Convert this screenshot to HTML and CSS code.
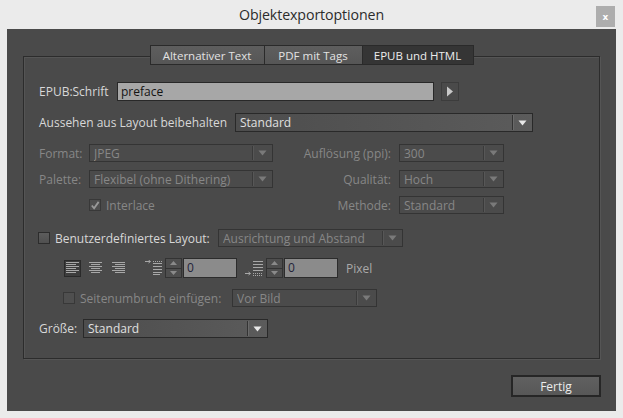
FILE: index.html
```html
<!DOCTYPE html>
<html lang="de">
<head>
<meta charset="utf-8">
<title>Objektexportoptionen</title>
<link rel="stylesheet" href="styles.css">
</head>
<body>
<div class="titlebar">
  <div></div>
  <div class="title">Objektexportoptionen</div>
  <div class="close">x</div>
</div>
<div class="window">
  <div class="group">
    <div class="tabs">
      <div class="tab t1">Alternativer Text</div>
      <div class="tab t2">PDF mit Tags</div>
      <div class="tab t3 active">EPUB und HTML</div>
    </div>

    <div class="row row-epub">
      <span class="lbl lbl-epub">EPUB:Schrift</span>
      <div class="input input-epub">preface</div>
      <div class="arrowbtn"><svg width="8" height="11" viewBox="0 0 8 11"><path d="M1 0.5 L7 5.5 L1 10.5 Z" fill="#c8c8c8"/></svg></div>
    </div>

    <div class="row row-layout">
      <span class="lbl lbl-layout">Aussehen aus Layout beibehalten</span>
      <div class="select sel-layout"><span class="val">Standard</span><span class="sep"></span><span class="arr"><svg width="9" height="6" viewBox="0 0 9 6"><path d="M0.5 0.5 L8.5 0.5 L4.5 5.5 Z"/></svg></span></div>
    </div>

    <div class="imggrid">
      <span class="lbl dis">Format:</span>
      <div class="select dis sel-left"><span class="val">JPEG</span><span class="sep"></span><span class="arr"><svg width="9" height="6" viewBox="0 0 9 6"><path d="M0.5 0.5 L8.5 0.5 L4.5 5.5 Z"/></svg></span></div>
      <span class="lbl dis rlbl">Auflösung (ppi):</span>
      <div class="select dis sel-right"><span class="val">300</span><span class="sep"></span><span class="arr"><svg width="9" height="6" viewBox="0 0 9 6"><path d="M0.5 0.5 L8.5 0.5 L4.5 5.5 Z"/></svg></span></div>

      <span class="lbl dis">Palette:</span>
      <div class="select dis sel-left"><span class="val">Flexibel (ohne Dithering)</span><span class="sep"></span><span class="arr"><svg width="9" height="6" viewBox="0 0 9 6"><path d="M0.5 0.5 L8.5 0.5 L4.5 5.5 Z"/></svg></span></div>
      <span class="lbl dis rlbl">Qualität:</span>
      <div class="select dis sel-right"><span class="val">Hoch</span><span class="sep"></span><span class="arr"><svg width="9" height="6" viewBox="0 0 9 6"><path d="M0.5 0.5 L8.5 0.5 L4.5 5.5 Z"/></svg></span></div>

      <span></span>
      <div class="check-line"><span class="cb dis checked"><svg width="11" height="11" viewBox="0 0 11 11"><path d="M2 5.5 L4.5 8.5 L9.5 1.5" fill="none" stroke="#9a9a9a" stroke-width="2"/></svg></span><span class="dis">Interlace</span></div>
      <span class="lbl dis rlbl">Methode:</span>
      <div class="select dis sel-right"><span class="val">Standard</span><span class="sep"></span><span class="arr"><svg width="9" height="6" viewBox="0 0 9 6"><path d="M0.5 0.5 L8.5 0.5 L4.5 5.5 Z"/></svg></span></div>
    </div>

    <div class="row row-custom">
      <div class="check-line custom-lbl"><span class="cb"></span><span class="lbl">Benutzerdefiniertes Layout:</span></div>
      <div class="select dis sel-custom"><span class="val">Ausrichtung und Abstand</span><span class="sep"></span><span class="arr"><svg width="9" height="6" viewBox="0 0 9 6"><path d="M0.5 0.5 L8.5 0.5 L4.5 5.5 Z"/></svg></span></div>
    </div>

    <div class="row row-align">
      <div class="alignbtns">
        <span class="abtn pressed"><svg width="13" height="12" viewBox="0 0 13 12"><g stroke="#a8a8a8" stroke-width="1"><path d="M0 0.5H13M0 2.5H10M0 4.5H13M0 6.5H10M0 8.5H13M0 10.5H10"/></g></svg></span>
        <span class="abtn"><svg width="13" height="12" viewBox="0 0 13 12"><g stroke="#a8a8a8" stroke-width="1"><path d="M0 0.5H13M2 2.5H11M0 4.5H13M2 6.5H11M0 8.5H13M2 10.5H11"/></g></svg></span>
        <span class="abtn"><svg width="13" height="12" viewBox="0 0 13 12"><g stroke="#a8a8a8" stroke-width="1"><path d="M0 0.5H13M3 2.5H13M0 4.5H13M3 6.5H13M0 8.5H13M3 10.5H13"/></g></svg></span>
      </div>
      <span class="spico ico-before"><svg width="17" height="16" viewBox="0 0 17 16"><g stroke="#a8a8a8" stroke-width="1" fill="none"><path d="M0 1.5H5"/><path d="M3.5 0 L5.5 1.5 L3.5 3"/><path d="M8 1.5H17" stroke-dasharray="1 1"/><path d="M8 3.5H17"/><path d="M8 6.5H17M8 9.5H17M8 12.5H17M8 14.5H15"/></g></svg></span>
      <span class="spin"><span class="half"><svg width="7" height="4" viewBox="0 0 7 4"><path d="M0 4 L3.5 0 L7 4Z" fill="#8a8a8a"/></svg></span><span class="half"><svg width="7" height="4" viewBox="0 0 7 4"><path d="M0 0 L3.5 4 L7 0Z" fill="#8a8a8a"/></svg></span></span>
      <div class="numinput">0</div>
      <span class="spico ico-after"><svg width="18" height="16" viewBox="0 0 18 16"><g stroke="#a8a8a8" stroke-width="1" fill="none"><path d="M8 1.5H18M8 4.5H18M8 7.5H18M8 10.5H18"/><path d="M8 13.5H18" stroke-dasharray="1 1"/><path d="M8 15.5H18" stroke-dasharray="1 1"/><path d="M0 13.5H5"/><path d="M3.5 12 L5.5 13.5 L3.5 15"/></g></svg></span>
      <span class="spin"><span class="half"><svg width="7" height="4" viewBox="0 0 7 4"><path d="M0 4 L3.5 0 L7 4Z" fill="#8a8a8a"/></svg></span><span class="half"><svg width="7" height="4" viewBox="0 0 7 4"><path d="M0 0 L3.5 4 L7 0Z" fill="#8a8a8a"/></svg></span></span>
      <div class="numinput">0</div>
      <span class="pixel">Pixel</span>
    </div>

    <div class="row row-break">
      <div class="check-line break-lbl"><span class="cb dis"></span><span class="dis">Seitenumbruch einfügen:</span></div>
      <div class="select dis sel-break"><span class="val">Vor Bild</span><span class="sep"></span><span class="arr"><svg width="9" height="6" viewBox="0 0 9 6"><path d="M0.5 0.5 L8.5 0.5 L4.5 5.5 Z"/></svg></span></div>
    </div>

    <div class="row row-size">
      <span class="lbl lbl-size">Größe:</span>
      <div class="select sel-size"><span class="val">Standard</span><span class="sep"></span><span class="arr"><svg width="9" height="6" viewBox="0 0 9 6"><path d="M0.5 0.5 L8.5 0.5 L4.5 5.5 Z"/></svg></span></div>
    </div>
  </div>
  <div class="footer">
    <button class="btn">Fertig</button>
  </div>
</div>
</body>
</html>
```

FILE: styles.css
```css
* { box-sizing: border-box; }
html, body {
  margin: 0;
  padding: 0;
}
body {
  width: 623px;
  height: 418px;
  background: #ebebeb;
  font-family: "Open Sans", "Noto Sans", sans-serif;
  font-size: 12px;
  color: #d8d8d8;
  overflow: hidden;
}

.titlebar {
  height: 29px;
  display: grid;
  grid-template-columns: 1fr auto 1fr;
  align-items: start;
}
.title {
  font-size: 14.2px;
  color: #2b2b2b;
  line-height: 30px;
  letter-spacing: -0.1px;
}
.close {
  justify-self: end;
  margin: 6px 8px 0 0;
  width: 19px;
  height: 21px;
  background: #adadad;
  color: #fff;
  font-family: "DejaVu Sans", sans-serif;
  font-weight: bold;
  font-size: 9px;
  display: flex;
  align-items: center;
  justify-content: center;
}

.window {
  margin: 0 7px;
  height: 382px;
  background: #4a4a4a;
  padding: 27px 16px 0;
}

.group {
  height: 303px;
  border: 1px solid #2c2c2c;
  box-shadow: inset 1px 1px 0 #555, 1px 1px 0 #555;
  padding: 0 0 0 15px;
}

.tabs {
  display: flex;
  justify-content: center;
  margin: -12px 0 0 -15px;
  height: 20px;
}
.tab {
  height: 20px;
  border: 1px solid #2a2a2a;
  border-left: none;
  background: linear-gradient(#5e5e5e, #565656);
  color: #e2e2e2;
  display: flex;
  align-items: center;
  justify-content: center;
  font-size: 11.5px;
}
.t1 { width: 115px; border-left: 1px solid #2a2a2a; }
.t2 { width: 98px; }
.t3 { width: 111px; }
.tab.active { background: #353535; color: #ececec; }

.row {
  display: flex;
  align-items: center;
}
.lbl { color: #d8d8d8; white-space: nowrap; }
.dis { color: #878787; white-space: nowrap; }

.input {
  height: 19px;
  border: 1px solid #282828;
  background: #a7a7a7;
  color: #141414;
  padding-left: 3px;
  font-size: 12px;
  line-height: 17px;
}

.row-epub { margin-top: 17px; height: 19px; }
.lbl-epub { width: 78px; }
.input-epub { width: 317px; }
.arrowbtn {
  margin-left: 7px;
  width: 18px;
  height: 19px;
  border: 1px solid #3c3c3c;
  display: flex;
  align-items: center;
  justify-content: center;
}

.select {
  display: flex;
  align-items: center;
  height: 19px;
  border: 1px solid #292929;
  background: linear-gradient(to right, #4d4d4d, #5b5b5b);
  color: #e0e0e0;
  padding-left: 4px;
  font-size: 12px;
}
.select .val { flex: 1; white-space: nowrap; overflow: hidden; }
.select .sep {
  width: 1px;
  height: 15px;
  background: #333;
  box-shadow: 1px 0 0 #6a6a6a;
}
.select .arr {
  width: 19px;
  display: flex;
  justify-content: center;
  fill: #e8e8e8;
}
.select.dis {
  height: 18px;
  border-color: #343434;
  background: #4b4b4b;
  color: #878787;
}
.select.dis .sep { background: #3a3a3a; box-shadow: 1px 0 0 #575757; height: 14px; }
.select.dis .arr { fill: #7a7a7a; }

.row-layout { margin-top: 12px; }
.lbl-layout { width: 196px; }
.sel-layout { width: 298px; }

.imggrid {
  margin-top: 12px;
  display: grid;
  grid-template-columns: 50px 184px 126px 105px;
  grid-auto-rows: 18px;
  row-gap: 8px;
  align-items: center;
}
.rlbl { text-align: right; padding-right: 8px; }
.sel-left, .sel-right { width: 100%; }

.check-line {
  display: flex;
  align-items: center;
}
.cb {
  width: 12px;
  height: 12px;
  border: 1px solid #2c2c2c;
  background: linear-gradient(#5c5c5c, #505050);
  margin-right: 5px;
  display: flex;
  align-items: center;
  justify-content: center;
  flex: none;
}
.cb.dis {
  border-color: #383838;
  background: #4f4f4f;
}

.row-custom { margin-top: 15px; margin-left: -1px; }
.custom-lbl { width: 180px; }
.sel-custom { width: 185px; }

.row-align { margin-top: 11px; height: 20px; }
.alignbtns {
  display: flex;
  gap: 6px;
  margin-left: 25px;
}
.abtn {
  width: 17px;
  height: 17px;
  display: flex;
  align-items: center;
  justify-content: center;
  border: 1px solid transparent;
}
.abtn.pressed {
  background: #3d3d3d;
  border-color: #2a2a2a;
}
.spico { display: flex; align-items: center; }
.ico-before { margin-left: 18px; }
.ico-after { margin-left: 8px; }
.spin {
  margin-left: 3px;
  width: 17px;
  height: 20px;
  border: 1px solid #333;
  display: flex;
  flex-direction: column;
}
.spin .half {
  flex: 1;
  display: flex;
  align-items: center;
  justify-content: center;
  background: #4e4e4e;
}
.spin .half + .half { border-top: 1px solid #333; }
.numinput {
  margin-left: 1px;
  width: 54px;
  height: 20px;
  border: 1px solid #2c2c2c;
  background: #8b8b8b;
  color: #23233a;
  font-size: 12px;
  padding-left: 3px;
  line-height: 18px;
}
.pixel { margin-left: 8px; color: #a9a9a9; font-size: 12px; }

.row-break { margin-top: 11px; }
.break-lbl { margin-left: 24px; width: 169px; }
.sel-break { width: 145px; height: 19px; }

.row-size { margin-top: 12px; }
.lbl-size { width: 44px; }
.sel-size { width: 185px; }

.footer {
  display: flex;
  justify-content: flex-end;
  margin-top: 16px;
  margin-right: -1px;
}
.btn {
  width: 90px;
  height: 22px;
  border: 2px solid #262626;
  background: linear-gradient(#606060, #575757);
  color: #ececec;
  font-family: "Open Sans", "Noto Sans", sans-serif;
  font-size: 12px;
  padding: 0;
}
```
